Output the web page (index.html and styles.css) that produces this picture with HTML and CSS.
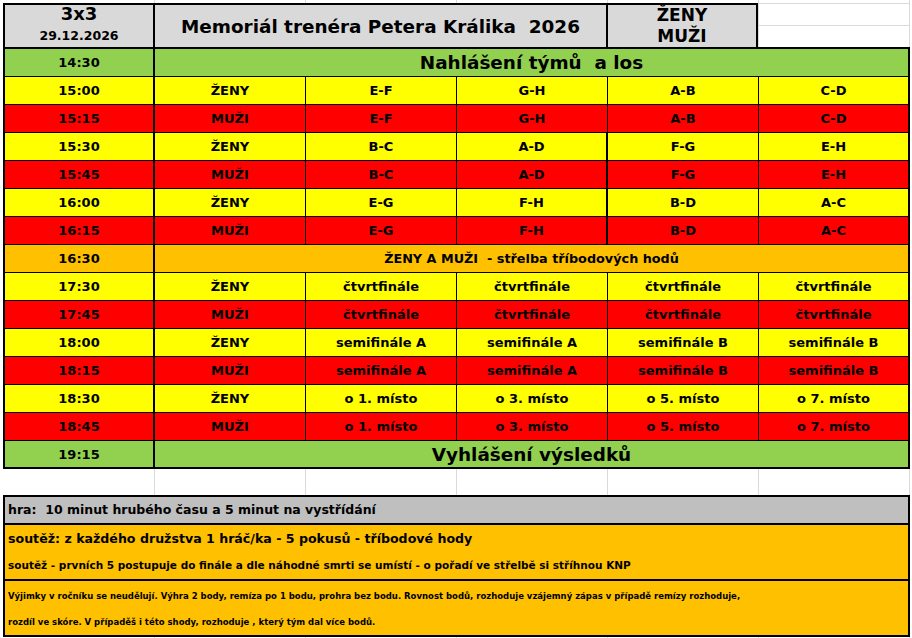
FILE: index.html
```html
<!DOCTYPE html>
<html lang="cs">
<head>
<meta charset="utf-8">
<title>Memoriál trenéra Petera Králika 2026</title>
<link rel="stylesheet" href="styles.css">
</head>
<body>
<div class="sheet">
  <div class="top">
    <div class="head">
      <div class="hc h-event"><div class="ev-big">3x3</div><div class="ev-date">29.12.2026</div></div>
      <div class="hc h-title">Memoriál trenéra Petera Králika&nbsp; 2026</div>
      <div class="hc h-cat"><div>ŽENY</div><div>MUŽI</div></div>
    </div>
    <div class="blank"><div class="blank-row"></div></div>
  </div>

  <div class="schedule">
    <div class="row green"><div class="c">14:30</div><div class="c span label">Nahlášení týmů&nbsp; a los</div></div>
    <div class="row yellow"><div class="c">15:00</div><div class="c">ŽENY</div><div class="c">E-F</div><div class="c">G-H</div><div class="c">A-B</div><div class="c">C-D</div></div>
    <div class="row red"><div class="c">15:15</div><div class="c">MUŽI</div><div class="c">E-F</div><div class="c">G-H</div><div class="c">A-B</div><div class="c">C-D</div></div>
    <div class="row yellow thick"><div class="c">15:30</div><div class="c">ŽENY</div><div class="c">B-C</div><div class="c">A-D</div><div class="c">F-G</div><div class="c">E-H</div></div>
    <div class="row red thick"><div class="c">15:45</div><div class="c">MUŽI</div><div class="c">B-C</div><div class="c">A-D</div><div class="c">F-G</div><div class="c">E-H</div></div>
    <div class="row yellow thick"><div class="c">16:00</div><div class="c">ŽENY</div><div class="c">E-G</div><div class="c">F-H</div><div class="c">B-D</div><div class="c">A-C</div></div>
    <div class="row red thick"><div class="c">16:15</div><div class="c">MUŽI</div><div class="c">E-G</div><div class="c">F-H</div><div class="c">B-D</div><div class="c">A-C</div></div>
    <div class="row orange"><div class="c">16:30</div><div class="c span">ŽENY A MUŽI&nbsp; - střelba tříbodových hodů</div></div>
    <div class="row yellow"><div class="c">17:30</div><div class="c">ŽENY</div><div class="c">čtvrtfinále</div><div class="c">čtvrtfinále</div><div class="c">čtvrtfinále</div><div class="c">čtvrtfinále</div></div>
    <div class="row red"><div class="c">17:45</div><div class="c">MUŽI</div><div class="c">čtvrtfinále</div><div class="c">čtvrtfinále</div><div class="c">čtvrtfinále</div><div class="c">čtvrtfinále</div></div>
    <div class="row yellow"><div class="c">18:00</div><div class="c">ŽENY</div><div class="c">semifinále A</div><div class="c">semifinále A</div><div class="c">semifinále B</div><div class="c">semifinále B</div></div>
    <div class="row red"><div class="c">18:15</div><div class="c">MUŽI</div><div class="c">semifinále A</div><div class="c">semifinále A</div><div class="c">semifinále B</div><div class="c">semifinále B</div></div>
    <div class="row yellow"><div class="c">18:30</div><div class="c">ŽENY</div><div class="c">o 1. místo</div><div class="c">o 3. místo</div><div class="c">o 5. místo</div><div class="c">o 7. místo</div></div>
    <div class="row red"><div class="c">18:45</div><div class="c">MUŽI</div><div class="c">o 1. místo</div><div class="c">o 3. místo</div><div class="c">o 5. místo</div><div class="c">o 7. místo</div></div>
    <div class="row green"><div class="c">19:15</div><div class="c span label">Vyhlášení výsledků</div></div>
  </div>

  <div class="gap"></div>

  <div class="notes">
    <div class="note-gray">hra:&nbsp; 10 minut hrubého času a 5 minut na vystřídání</div>
    <div class="note-block">
      <div class="line l1">soutěž: z každého družstva 1 hráč/ka - 5 pokusů - tříbodové hody</div>
      <div class="line l2">soutěž - prvních 5 postupuje do finále a dle náhodné smrti se umístí - o pořadí ve střelbě si stříhnou KNP</div>
    </div>
    <div class="note-block last">
      <div class="line l3">Výjimky v ročníku se neudělují. Výhra 2 body, remíza po 1 bodu, prohra bez bodu. Rovnost bodů, rozhoduje vzájemný zápas v případě remízy rozhoduje,</div>
      <div class="line l3">rozdíl ve skóre. V případěš i této shody, rozhoduje , který tým dal více bodů.</div>
    </div>
  </div>
</div>
</body>
</html>
```

FILE: styles.css
```css
* {
  box-sizing: border-box;
}

html, body {
  margin: 0;
  padding: 0;
}

body {
  width: 912px;
  height: 638px;
  overflow: hidden;
  background-color: #ffffff;
  background-image: repeating-linear-gradient(90deg, transparent 0 150px, #dadada 150px 151px);
  background-position: 4px 0;
  font-family: "DejaVu Sans", "Noto Sans", sans-serif;
  font-weight: bold;
  color: #000;
}

.sheet {
  padding: 3px 0 0 3px;
  width: 912px;
}

/* header */
.top {
  display: flex;
  height: 44px;
}

.head {
  display: flex;
  width: 755px;
  height: 44px;
  border: 2px solid #000;
  border-bottom: none;
  background: #d9d9d9;
}

.hc {
  display: flex;
  flex-direction: column;
  align-items: center;
  justify-content: center;
}

.h-event {
  width: 150px;
  border-right: 2px solid #000;
  justify-content: flex-start;
}

.ev-big {
  font-size: 18px;
  line-height: 18px;
}

.ev-date {
  font-size: 12.5px;
  line-height: 16px;
  margin-top: 5px;
}

.h-title {
  width: 453px;
  border-right: 2px solid #000;
  font-size: 18.4px;
  padding-top: 1px;
}

.h-cat {
  width: 148px;
  font-size: 17px;
  line-height: 21px;
}

.blank {
  width: 152px;
  height: 44px;
  border-top: 1px solid #dadada;
}

.blank-row {
  height: 22px;
  border-bottom: 1px solid #dadada;
}

/* schedule */
.schedule {
  width: 907px;
  border: 2px solid #000;
}

.row {
  display: grid;
  grid-template-columns: 150px 151px 151px 151px 151px 1fr;
  height: 28px;
  border-bottom: 1px solid #000;
}

.row:last-child {
  height: 26px;
  border-bottom: none;
}

.c {
  display: flex;
  align-items: center;
  justify-content: center;
  border-right: 1px solid #000;
  font-size: 13px;
  white-space: nowrap;
}

.c:first-child {
  border-right-width: 2px;
}

.c:last-child {
  border-right: none;
}

.thick .c:nth-child(4) {
  border-right-width: 2px;
}

.span {
  grid-column: 2 / -1;
}

.orange .span {
  font-size: 12.8px;
}

.label {
  font-size: 18.4px;
}

.green { background: #92d050; }
.yellow { background: #ffff00; }
.red { background: #ff0000; }
.orange { background: #ffc000; }

/* notes */
.gap {
  height: 26px;
}

.notes {
  width: 907px;
  border: 2px solid #000;
}

.note-gray {
  height: 28px;
  background: #bfbfbf;
  border-bottom: 2px solid #000;
  font-size: 12.5px;
  line-height: 26px;
  padding-left: 3px;
}

.note-block {
  height: 56px;
  background: #ffc000;
  border-bottom: 2px solid #000;
  padding-left: 3px;
}

.note-block.last {
  height: 54px;
  border-bottom: none;
  padding-top: 2px;
}

.line {
  white-space: nowrap;
}

.l1 {
  font-size: 12.6px;
  line-height: 27px;
}

.l2 {
  font-size: 10.5px;
  line-height: 27px;
}

.l3 {
  font-size: 8.5px;
  line-height: 26px;
}
```
